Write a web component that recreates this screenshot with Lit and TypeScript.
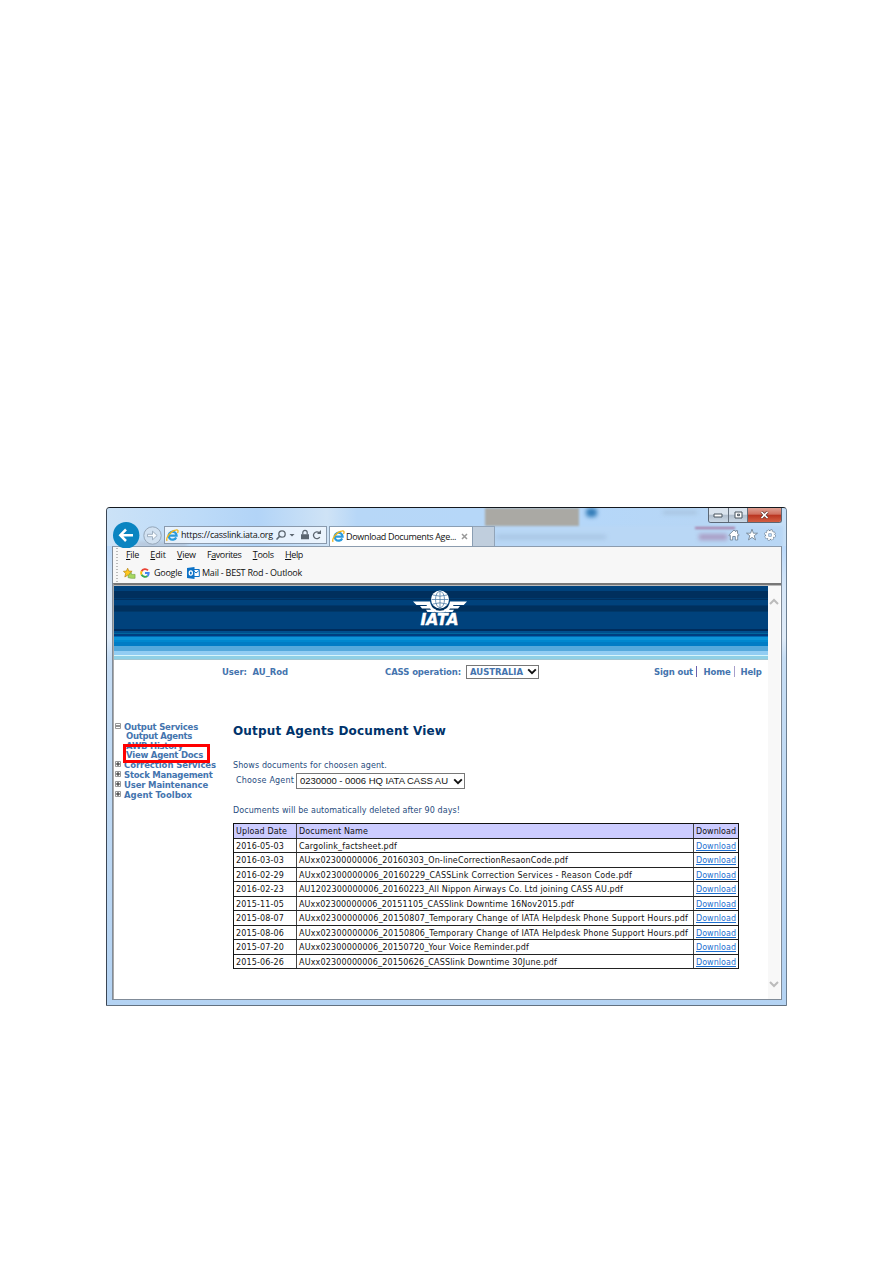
import { LitElement, html, css } from "lit";
import { customElement } from "lit/decorators.js";
import { styleMap } from "lit/directives/style-map.js";

const FONTS: Record<string, string> = {
  ui: '9px "Open Sans"',
  bold: 'bold 8.5px "DejaVu Sans"',
  body: '8px "DejaVu Sans"',
  title: 'bold 12px "DejaVu Sans"',
  sel: '9.5px "Liberation Sans"',
};
const ctx = document.createElement("canvas").getContext("2d")!;

/** Text run tracked so that it fills the given width. */
function run(text: string, width: number, font = "body", content: unknown = text, extra = "") {
  ctx.font = FONTS[font];
  const spacing = (width - ctx.measureText(text).width) / text.length;
  return html`<span class="run ${font} ${extra}" style=${styleMap({ width: `${width}px`, letterSpacing: `${spacing.toFixed(3)}px` })}>${content}</span>`;
}

const ieIcon = html`<svg class="ico" width="13" height="13" viewBox="0 0 13 13">
  <path d="M10.2 8.4A4 4 0 1 1 10.6 6.6H3.6" fill="none" stroke="#2b9bdc" stroke-width="2.2"/>
  <path d="M1.1 11.8C-.6 9 4.600 2 9.500 1.100 12.300.5 12.500 2 11.500 4" fill="none" stroke="#f0b51c" stroke-width="1.300"/>
</svg>`;

const chevron = html`<svg class="ico" width="10" height="7" viewBox="0 0 10 7"><path d="M1.200 1.300L5 5.200 8.800 1.300" fill="none" stroke="#111" stroke-width="1.900"/></svg>`;

const stripes: [string, number][] = [
  ["#00427c", 5], ["#002f5d", 7], ["#003b70", 1], ["#00305f", 1], ["#00427c", 5],
  ["#00376b", 1], ["#00305d", 5], ["#003869", 1], ["#00427c", 17], ["#002c5c", 2],
  ["#004f8f", 2], ["#00689f", 1], ["#003e80", 2], ["#006ab4", 1], ["#0d94d8", 3],
  ["#0088cf", 2], ["#007cc5", 4], ["#55a9dc", 5], ["#92cdf3", 4], ["#d8f5fb", 1],
  ["#8fd0e6", 3], ["#a3c7d2", 1],
];

const menus: [string, number, number][] = [
  ["File", 13, 0], ["Edit", 15.5, 0], ["View", 18.5, 0], ["Favorites", 34.5, 1], ["Tools", 21, 0], ["Help", 18, 0],
];

const tree: [string, string, number][] = [
  ["-", "Output Services", 74], ["", "Output Agents", 66], ["", "AWB History", 57], ["", "View Agent Docs", 77],
  ["+", "Correction Services", 92], ["+", "Stock Management", 88.5], ["+", "User Maintenance", 84], ["+", "Agent Toolbox", 68],
];

const AGENT = "0230000";
const BRANCH = "0006";
const ID = AGENT + BRANCH;

const docs: [string, string, number][] = [
  ["2016-05-03", "Cargolink_factsheet.pdf", 98],
  ["2016-03-03", `AUxx${ID}_20160303_On-lineCorrectionResaonCode.pdf`, 269],
  ["2016-02-29", `AUxx${ID}_20160229_CASSLink Correction Services - Reason Code.pdf`, 333],
  ["2016-02-23", `AU12${ID}_20160223_All Nippon Airways Co. Ltd joining CASS AU.pdf`, 324],
  ["2015-11-05", `AUxx${ID}_20151105_CASSlink Downtime 16Nov2015.pdf`, 275],
  ["2015-08-07", `AUxx${ID}_20150807_Temporary Change of IATA Helpdesk Phone Support Hours.pdf`, 389],
  ["2015-08-06", `AUxx${ID}_20150806_Temporary Change of IATA Helpdesk Phone Support Hours.pdf`, 389],
  ["2015-07-20", `AUxx${ID}_20150720_Your Voice Reminder.pdf`, 230],
  ["2015-06-26", `AUxx${ID}_20150626_CASSlink Downtime 30June.pdf`, 258],
];

@customElement("app-root")
export class AppRoot extends LitElement {
  static styles = css`
    :host { display: block; background: #fff; height: 1263px; padding: 507px 0 0 106px; box-sizing: border-box; }
    * { box-sizing: border-box; }
    svg { display: block; flex: none; }
    .run { display: block; flex: none; white-space: pre; }
    .ui { font: 9px/12px "Open Sans", sans-serif; color: #111; }
    .bold { font: bold 8.5px/10px "DejaVu Sans", sans-serif; color: #4474ae; }
    .body { font: 8px/12px "DejaVu Sans", sans-serif; color: #111; }
    .title { font: bold 12px/16px "DejaVu Sans", sans-serif; color: #00336b; }
    .sel { font: 9.5px/14px "Liberation Sans", sans-serif; color: #111; }
    .navy { color: #1f4c7e; }

    .window { position: relative; width: 681px; height: 499px; display: flex; flex-direction: column; overflow: hidden;
      border: 1px solid #3b4654; border-top-color: #15191e; border-right-color: #6c7f92; border-bottom-color: #62707f; border-radius: 4px 4px 1px 1px;
      background: linear-gradient(180deg, #b4d6f8 0, #bcdafa 40px, #d6e6f7 80px, #dfebf8 130px, #c6ddf4 150px, #b4d3f3 100%); }
    .smudges { position: absolute; inset: 0 0 auto 0; height: 38px; overflow: hidden;
      background: linear-gradient(90deg, #cbe2f7 0, #bddbf8 90px, #b2d4f7 150px, #cfe3f6 220px, #b7d7f7 250px, #b5d7f9 480px, #b7d6f5 600px, #c6dff7 100%); }
    .smudges div { position: absolute; }
    .gray { left: 378px; top: 0; width: 94px; height: 18px; background: #aaa9a4; filter: blur(1px); }
    .low { left: 386px; top: 18px; width: 290px; height: 21px; background: #b9d7f5; filter: blur(1px); }
    .dot { left: 479px; top: 0; width: 11px; height: 9px; border-radius: 4px; background: #337db8; filter: blur(2px); }
    .plum { left: 588px; top: 19px; width: 40px; height: 2px; background: #a575a0; filter: blur(1px); }
    .plumb { left: 592px; top: 26px; width: 28px; height: 6px; background: #a99bc2; filter: blur(2px); }
    .haze1 { left: 389px; top: 27px; width: 110px; height: 4px; background: #a6c3e2; filter: blur(2px); }
    .haze2 { left: 556px; top: 3px; width: 34px; height: 3px; background: #a4bfda; filter: blur(2px); }
    .haze3 { left: 30px; top: 34px; width: 50px; height: 4px; background: #b0bdd0; filter: blur(2px); }

    .chrome { position: relative; height: 38px; flex: none; display: flex; padding: 14px 0 0 6px; }
    .fwd { margin-left: 3px; margin-top: 4px; }
    .address { display: flex; align-items: center; width: 163px; height: 18px; margin: 4px 0 0 2px; padding-left: 1px; border: 1px solid #8a9aad; background: rgba(243,249,255,.78); }
    .address .run { margin-left: 2px; }
    .tab { display: flex; align-items: center; width: 144px; height: 20px; margin: 4px 0 0 2px; padding-left: 2px; background: #fff; border: 1px solid #8a9eb3; border-bottom: 0; }
    .tab .run { margin-left: 1px; }
    .tabx { margin-left: 5px; }
    .newtab { width: 22px; height: 20px; margin-top: 4px; background: #c0cedd; border: 1px solid #92a4b8; border-left: 0; border-bottom: 0; }
    .tools { display: flex; gap: 6px; margin: 6px 0 0 233px; height: 14px; }
    .caption { position: absolute; right: 4px; top: 0; display: flex; width: 74px; height: 15px; border: 1px solid #5b6775; border-top: 0; border-radius: 0 0 3px 3px; overflow: hidden; }
    .caption div { width: 20px; display: flex; align-items: center; justify-content: center; border-right: 1px solid #65717e; background: linear-gradient(#d9e3ed 0 45%, #afbdcc 50%, #cbd9e6); }
    .caption .close { width: 33px; border: 0; background: linear-gradient(#dfa093 0, #d0705f 45%, #b93420 50%, #d35f43); }

    .panel { flex: none; margin-left: 5px; width: 670px; height: 454px; border: 1px solid #808b98; border-top-color: #8c9cae; background: #fff; display: flex; flex-direction: column; }
    .bars { height: 36px; flex: none; background: #f7f7f7; padding: 0 0 0 3px; display: flex; }
    .grip { width: 2px; height: 34px; margin-top: 1px; background: repeating-linear-gradient(#bbb 0 1px, transparent 1px 3px); }
    .lines { margin-left: 8px; }
    .menu { display: flex; gap: 11.300px; height: 16px; align-items: center; }
    .links { display: flex; height: 20px; align-items: center; margin-left: -3px; }
    .gicon { margin-left: 4px; }
    .google { margin-left: 4px; }
    .outlook { margin: 0 2px 0 5px; }
    .page { flex: 1; display: flex; border-top: 2px solid #777; border-left: 1px solid #aaa; box-shadow: inset 0 1px #bbb; padding-top: 1px; }
    .doc { width: 654px; flex: none; }
    .scroll { width: 12px; background: #f8f8f8; display: flex; flex-direction: column; justify-content: space-between; align-items: center; padding: 12px 0 11px; }
    .banner { height: 74px; display: grid; }
    .stripes, .logo { grid-area: 1 / 1; }
    .logo { justify-self: center; margin-top: 4px; margin-left: -3px; overflow: visible; }
    .userbar { height: 23px; display: flex; align-items: center; padding-left: 108px; }
    .cass { margin-left: 97px; }
    .choice { display: flex; align-items: center; justify-content: space-between; background: #fff; border: 1px solid #777; padding: 0 1px 0 4px; }
    .op { width: 73px; height: 14px; margin-left: 5px; padding-left: 3px; }
    .signout { margin-left: 115px; }
    .vbar { width: 1px; height: 11px; margin: 0 7px 0 2.500px; background: #6b62ae; }
    .vbar.second { margin: 0 6px 0 3px; background: #a79fcb; }
    .columns { display: flex; padding-top: 39px; }
    .tree { position: relative; width: 119px; flex: none; }
    .node { display: flex; height: 10px; padding-left: 1px; }
    .node .run { margin-left: 3px; }
    .node:first-child { height: 9px; }
    .node.leaf { height: 9.500px; padding-left: 9px; }
    .mark { position: absolute; left: 9px; top: 22px; width: 87px; height: 19px; border: 3px solid #f00; }
    .main .title { margin-top: 1px; }
    .shows { margin-top: 21px; height: 12px; }
    .pick { display: flex; align-items: center; height: 16px; margin-top: 1px; padding-left: 3px; }
    .agent { width: 169px; height: 16px; margin-left: 2px; padding-left: 3px; }
    .note { margin-top: 16px; height: 12px; }
    .table { width: 506px; margin-top: 6px; border: 1px solid #111; border-bottom: 0; }
    .tr { display: flex; height: 15px; border-bottom: 1px solid #222; }
    .tr:nth-child(even) { height: 14px; }
    .tr > div { padding: 2px 0 0 2px; width: 63px; border-right: 1px solid #444; }
    .tr > .name { width: 397px; }
    .tr > .get { width: 44px; border: 0; }
    .head { background: #ccccff; }
    .link { color: #1c6fd0; text-decoration: underline; }
  `;

  render() {
    return html`<div class="window">
      <div class="smudges"><div class="low"></div><div class="gray"></div><div class="dot"></div><div class="plum"></div><div class="plumb"></div><div class="haze1"></div><div class="haze2"></div><div class="haze3"></div></div>
      <div class="chrome">
        <svg width="27" height="26" viewBox="0 0 27 26"><circle cx="13.200" cy="13.200" r="13.200" fill="#0a84c1"/><path d="M20 13.200H8M13 7.500L7.300 13.200 13 19" fill="none" stroke="#fff" stroke-width="2.500"/></svg>
        <svg class="fwd" width="19" height="19" viewBox="0 0 19 19"><circle cx="9.500" cy="9.500" r="8.700" fill="#d1e1f1" stroke="#94a5b7"/><path d="M4.500 8.300h5V5.200l4.700 4.300-4.700 4.300v-3.100h-5z" fill="#f8fcff" stroke="#8ea0b3" stroke-width=".8"/></svg>
        <div class="address">${ieIcon}${run("https://casslink.iata.org", 92, "ui")}
          <svg width="50" height="15" viewBox="0 0 50 15"><g fill="none" stroke="#5c6670"><circle cx="9" cy="6" r="3.200" stroke-width="1.300"/><path d="M6.700 8.300L3.500 11.500" stroke-width="1.600"/><path d="M29.800 6.500V4.500a2.200 2.200 0 0 1 4.400 0v2" stroke-width="1.200"/><path d="M46.300 4.900A3.400 3.400 0 1 0 46.800 9" stroke-width="1.300"/></g><path d="M16.500 6h5L19 8.500zM28 6.200h8v5h-8zM44 6h4V2z" fill="#5c6670"/></svg>
        </div>
        <div class="tab">${ieIcon}${run("Download Documents Age...", 110, "ui")}<svg class="tabx" width="7" height="7" viewBox="0 0 7 7"><path d="M1 1l5 5M6 1l-5 5" stroke="#999" stroke-width="1.500"/></svg></div>
        <div class="newtab"></div>
        <div class="tools">
          <svg width="12" height="14" viewBox="0 0 12 14"><path d="M.8 7L6 2l1.800 1.700V2.600h1.700v2.700L11.200 7l-.8.900-.7-.6V12H7.300V8.500H4.700V12H2.300V7.300l-.7.600z" fill="#fff" stroke="#66788b" stroke-width=".8"/></svg>
          <svg width="12" height="14" viewBox="0 0 12 14"><path d="M6 1.200l1.400 4h4.100L8.200 7.700l1.300 4.200L6 9.400l-3.500 2.500 1.300-4.200L.5 5.200h4.100z" fill="#fff" stroke="#66788b" stroke-width=".8"/></svg>
          <svg width="12" height="14" viewBox="0 0 12 14"><circle cx="6" cy="7" r="4.700" fill="none" stroke="#66788b" stroke-width="2" stroke-dasharray="2.200 1.490"/><circle cx="6" cy="7" r="3.300" fill="none" stroke="#66788b" stroke-width="3.200"/><circle cx="6" cy="7" r="4.400" fill="none" stroke="#fff" stroke-width="1.500" stroke-dasharray="2 1.456"/><circle cx="6" cy="7" r="3" fill="none" stroke="#fff" stroke-width="2"/></svg>
        </div>
      </div>
      <div class="caption">
        <div><svg width="10" height="5" viewBox="0 0 10 5"><path d="M1 1h8v3H1z" fill="#fff" stroke="#49545f"/></svg></div>
        <div><svg width="9" height="8" viewBox="0 0 9 8"><path d="M1 1h7v6H1zM3.500 3.200h2v1.500h-2z" fill="#fff" stroke="#49545f"/></svg></div>
        <div class="close"><svg width="9" height="8" viewBox="0 0 9 8"><path d="M1.500 1l6 6M7.500 1l-6 6" stroke="#5c302b" stroke-width="3"/><path d="M1.500 1l6 6M7.500 1l-6 6" stroke="#fff" stroke-width="1.700"/></svg></div>
      </div>
      <div class="panel">
        <div class="bars"><div class="grip"></div>
          <div class="lines">
            <div class="menu">${menus.map(([t, w, i]) => run(t, w, "ui", html`${t.slice(0, i)}<u>${t[i]}</u>${t.slice(i + 1)}`))}</div>
            <div class="links">
              <svg width="13" height="13" viewBox="0 0 14 13"><path d="M5 .8l1.300 3.100 3.500.200L7.200 6.500l.8 3.800L5 8.300l-3 2 .8-3.800L.5 4.100l3.200-.2z" fill="#ffc91f" stroke="#b88718" stroke-width=".8"/><path d="M5.500 8.500L9 5.500v2h4v4.200H9l-3.500-.7z" fill="#a5d860" stroke="#6b9a38" stroke-width=".6"/></svg>
              <svg class="gicon" width="10" height="10" viewBox="0 0 10 10"><g fill="none" stroke-width="1.900"><path d="M8 2.300A4 4 0 0 0 1.600 3.200" stroke="#ea4335"/><path d="M1.600 3.200A4 4 0 0 0 1.600 6.800" stroke="#fbbc05"/><path d="M1.600 6.800A4 4 0 0 0 7.500 8" stroke="#34a853"/><path d="M7.500 8A4 4 0 0 0 8.700 5H5" stroke="#4285f4"/></g></svg>
              <div class="google">${run("Google", 28, "ui")}</div>
              <svg class="outlook" width="13" height="12" viewBox="0 0 13 12"><path d="M6 2.500h6.300v7H6z" fill="#fff" stroke="#0d72c6"/><path d="M6.500 3.500L9 6l3-2.500" fill="none" stroke="#0d72c6"/><path d="M0 1l7.500-1v12L0 11z" fill="#0d72c6"/><ellipse cx="3.800" cy="6" rx="1.600" ry="2.200" fill="none" stroke="#fff" stroke-width="1.200"/></svg>
              ${run("Mail - BEST Rod - Outlook", 100, "ui")}
            </div>
          </div>
        </div>
        <div class="page">
          <div class="doc">
            <div class="banner">
              <div class="stripes">${stripes.map(([c, h]) => html`<div style=${styleMap({ background: c, height: `${h}px` })}></div>`)}</div>
              <svg class="logo" width="54" height="42" viewBox="0 0 54 42">
                <g fill="#fff"><path d="M0 11.500h17q1 6.500 6 8L21 22h-6.500L13 19.800h5L17 18.600H9L7 16h7l-.5-1H3.500z"/><path d="M54 11.500H37q-1 6.500-6 8L33 22h6.500l1.500-2.200h-5l1-1.200h8l2-2.600h-7l.5-1h10.200z"/><circle cx="27" cy="9.500" r="9"/><path d="M20 19q7 3.500 14 0l1 2q-8 3-16 0z"/></g>
                <g fill="none" stroke="#527fa8" stroke-width=".8"><ellipse cx="27" cy="9.500" rx="4.500" ry="8.200"/><path d="M27 1v17M18.500 9.500h17M20 5q7 2.400 14 0M20 14q7-2.400 14 0"/></g>
                <text x="7.500" y="34.500" textLength="38" lengthAdjust="spacingAndGlyphs" font-family="DejaVu Sans" font-size="15" font-weight="bold" font-style="italic" fill="#fff" stroke="#fff" stroke-width=".4">IATA</text>
              </svg>
            </div>
            <div class="userbar">
              ${run("User:  AU_Rod", 66, "bold")}
              <div class="cass">${run("CASS operation:", 76, "bold")}</div>
              <div class="choice op">${run("AUSTRALIA", 53, "bold")}${chevron}</div>
              <div class="signout">${run("Sign out", 39, "bold")}</div>
              <div class="vbar"></div>${run("Home", 27, "bold")}
              <div class="vbar second"></div>${run("Help", 21, "bold")}
            </div>
            <div class="columns">
              <div class="tree">
                ${tree.map(([k, t, w]) => html`<div class="node ${k ? "" : "leaf"}">${k ? html`<svg width="6" height="8" viewBox="0 0 6 8"><path d="M.5 1.500h5v5h-5z" fill="#fff" stroke="#999"/><path d=${k === "+" ? "M1 4h4M3 2v4" : "M1 4h4"} stroke="#222"/></svg>` : ""}${run(t, w, "bold")}</div>`)}
                <div class="mark"></div>
              </div>
              <div class="main">
                ${run("Output Agents Document View", 213, "title")}
                <div class="shows">${run("Shows documents for choosen agent.", 154, "body", undefined, "navy")}</div>
                <div class="pick">${run("Choose Agent", 58, "body", undefined, "navy")}<div class="choice agent">${run(`${AGENT} - ${BRANCH} HQ IATA CASS AU`, 149, "sel")}${chevron}</div></div>
                <div class="note">${run("Documents will be automatically deleted after 90 days!", 227, "body", undefined, "navy")}</div>
                <div class="table">
                  <div class="tr head"><div>${run("Upload Date", 51)}</div><div class="name">${run("Document Name", 69)}</div><div class="get">${run("Download", 40)}</div></div>
                  ${docs.map(([d, n, w]) => html`<div class="tr"><div>${run(d, 48)}</div><div class="name">${run(n, w)}</div><div class="get">${run("Download", 40, "body", undefined, "link")}</div></div>`)}
                </div>
              </div>
            </div>
          </div>
          <div class="scroll">
            <svg width="10" height="7" viewBox="0 0 10 7"><path d="M1 6l4-4 4 4" fill="none" stroke="#bbb" stroke-width="2"/></svg>
            <svg width="10" height="7" viewBox="0 0 10 7"><path d="M1 1l4 4 4-4" fill="none" stroke="#bbb" stroke-width="2"/></svg>
          </div>
        </div>
      </div>
    </div>`;
  }
}
